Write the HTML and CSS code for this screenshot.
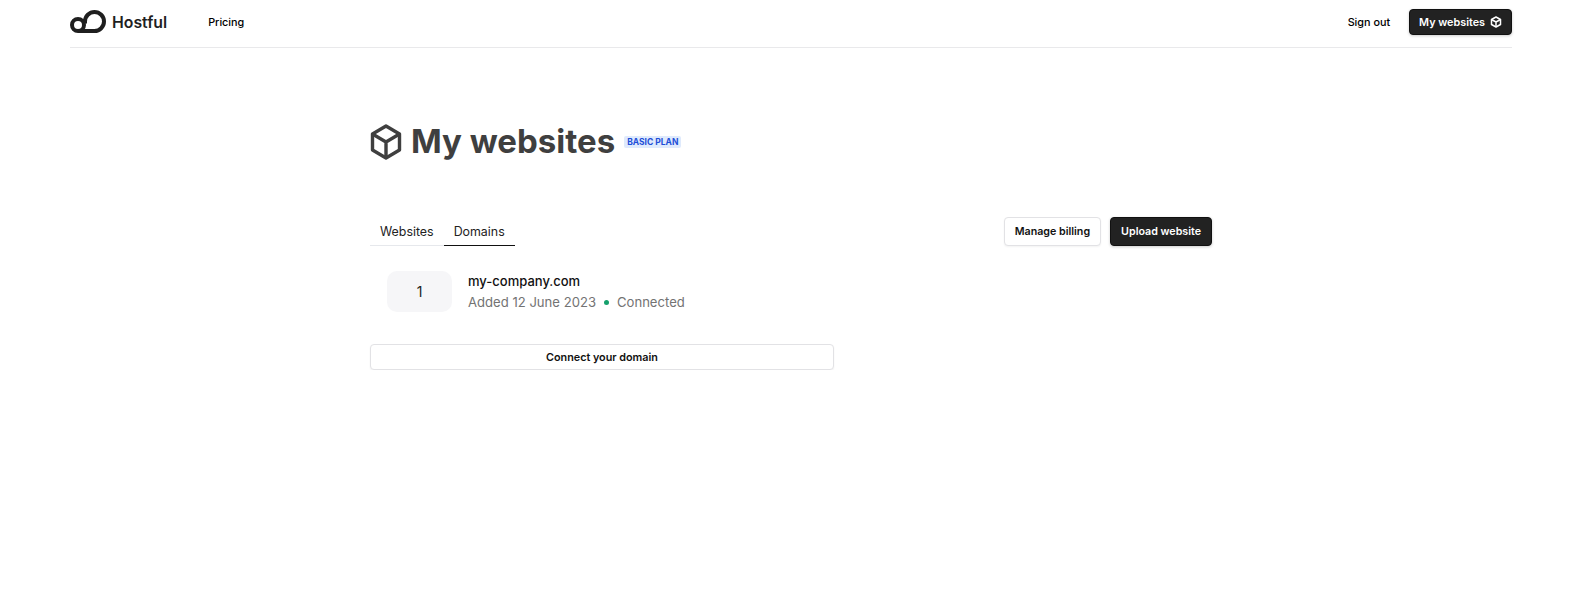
FILE: index.html
```html
<!DOCTYPE html>
<html lang="en">
<head>
  <meta charset="UTF-8">
  <title>My websites - Hostful</title>
  <link rel="stylesheet" href="styles.css">
</head>
<body>

<header class="topbar">
  <a class="brand" href="#">
    <svg class="brand-logo" width="36" height="24" viewBox="70 10 36 24" fill="none" stroke="#1f1f1f" stroke-width="4">
      <path d="M78 31a6 6 0 1 1 6-6a6 6 0 0 1-6 6h16.500a9.500 9.500 0 1 0-9.500-9.500v2"/>
    </svg>
    <span>Hostful</span>
  </a>
  <a class="nav-link pricing" href="#">Pricing</a>
  <div class="topbar-right">
    <a class="nav-link" href="#">Sign out</a>
    <button class="btn btn-dark btn-nav">
      My websites
      <svg class="cube" width="12" height="12" viewBox="0 0 24 24" fill="none" stroke="#fff" stroke-width="3" stroke-linejoin="round">
        <path d="M12 2l9 5v10l-9 5-9-5V7z"/>
        <path d="M3 7l9 5 9-5M12 12v10"/>
      </svg>
    </button>
  </div>
</header>

<main class="content">
  <div class="title-row">
    <svg class="title-icon" width="32" height="36" viewBox="0 0 32 36" fill="none" stroke="#3f3f3f" stroke-width="3.4" stroke-linejoin="round">
      <path d="M16 2l13.500 8v16L16 34 2.500 26V10z"/>
      <path d="M2.500 10L16 18l13.500-8M16 18v16"/>
    </svg>
    <h1>My websites</h1>
    <span class="badge">BASIC PLAN</span>
  </div>

  <div class="toolbar">
    <div class="tabs">
      <a class="tab" href="#">Websites</a>
      <a class="tab active" href="#">Domains</a>
    </div>
    <div class="actions">
      <button class="btn btn-light">Manage billing</button>
      <button class="btn btn-dark">Upload website</button>
    </div>
  </div>

  <div class="domains">
    <div class="domain">
      <div class="domain-num">1</div>
      <div>
        <div class="domain-name">my-company.com</div>
        <div class="domain-meta">
          <span>Added 12 June 2023</span>
          <span class="dot"></span>
          <span>Connected</span>
        </div>
      </div>
    </div>
    <button class="btn btn-light btn-wide">Connect your domain</button>
  </div>
</main>

</body>
</html>
```

FILE: styles.css
```css
* {
  box-sizing: border-box;
}

body {
  margin: 0;
  background: #fff;
  color: #111;
  font-family: Inter, 'Liberation Sans', sans-serif;
}

a {
  color: inherit;
  text-decoration: none;
}

.topbar {
  display: flex;
  align-items: center;
  height: 48px;
  margin: 0 69px 0 70px;
  padding-bottom: 3px;
  border-bottom: 1px solid #e9e9eb;
}

.brand {
  display: flex;
  align-items: center;
  gap: 6px;
  font-size: 15.8px;
  font-weight: 600;
  color: #1f1f1f;
}

.brand-logo {
  display: block;
}

.nav-link {
  font-size: 10.8px;
  font-weight: 500;
  color: #000;
}

.pricing {
  margin-left: 41px;
}

.topbar-right {
  display: flex;
  align-items: center;
  gap: 19px;
  margin-left: auto;
}

.btn {
  height: 29px;
  padding: 0 10px;
  border-radius: 4px;
  font-family: inherit;
  font-size: 10.7px;
  font-weight: 600;
  cursor: pointer;
}

.btn-dark {
  background: #222;
  border: 1px solid #111;
  color: #fff;
  box-shadow: 0 1px 3px rgba(0, 0, 0, 0.2);
}

.btn-light {
  background: #fff;
  border: 1px solid #e2e2e5;
  color: #111;
  box-shadow: 0 1px 2px rgba(0, 0, 0, 0.05);
}

.btn-nav {
  display: flex;
  align-items: center;
  gap: 5px;
  height: 26px;
  padding: 0 9px;
  font-size: 10.8px;
}

.content {
  width: 842px;
  margin: 75px 0 0 370px;
}

.title-row {
  display: flex;
  align-items: center;
  height: 36px;
}

.title-icon {
  margin-top: 2px;
}

h1 {
  margin: 0 9px 0 9px;
  font-size: 33px;
  font-weight: 700;
  color: #3f3f3f;
}

.badge {
  margin-top: 2px;
  padding: 1px 3px;
  border-radius: 2px;
  background: #dfeafc;
  color: #1d4ed8;
  font-size: 8.5px;
  font-weight: 700;
}

.toolbar {
  display: flex;
  justify-content: space-between;
  align-items: flex-end;
  margin-top: 58px;
}

.tabs {
  display: flex;
  width: 146px;
}

.tab {
  padding: 0 10px 6px;
  border-bottom: 1px solid #e6e8ec;
  font-size: 12.4px;
  color: #222;
}

.tab.active {
  border-bottom-color: #111;
}

.actions {
  display: flex;
  gap: 9px;
}

.domains {
  width: 464px;
}

.domain {
  display: flex;
  align-items: center;
  gap: 16px;
  margin: 25px 0 0 17px;
}

.domain-num {
  display: flex;
  justify-content: center;
  align-items: center;
  width: 65px;
  height: 41px;
  border-radius: 10px;
  background: #f6f6f8;
  font-size: 14px;
  color: #222;
}

.domain-name {
  font-size: 13px;
  font-weight: 500;
  color: #111;
}

.domain-meta {
  display: flex;
  align-items: center;
  gap: 8px;
  margin-top: 5px;
  font-size: 13.1px;
  color: #737373;
}

.dot {
  width: 5px;
  height: 5px;
  border-radius: 50%;
  background: #16a06c;
}

.btn-wide {
  display: block;
  width: 100%;
  height: 26px;
  margin-top: 32px;
  font-size: 10.8px;
}
```
